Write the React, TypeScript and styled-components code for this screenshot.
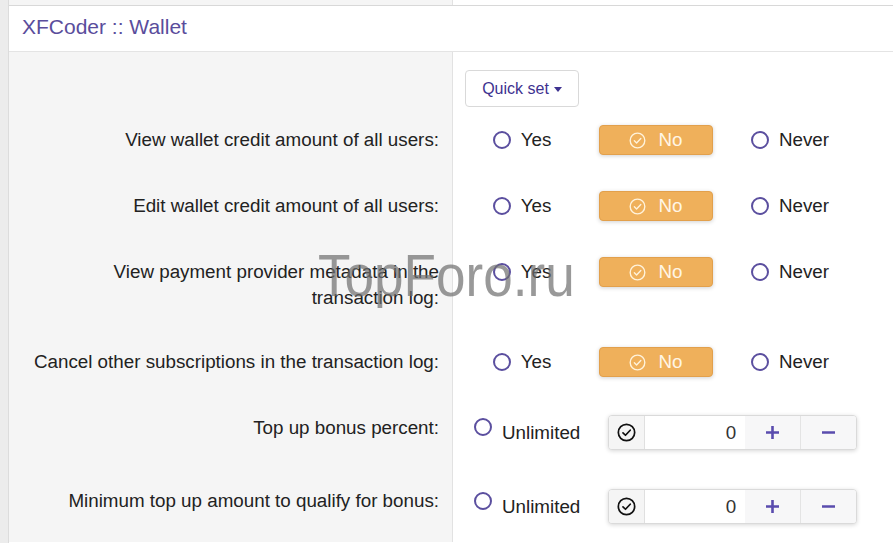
import React, { FC } from "react";
import styled, { createGlobalStyle } from "styled-components";

const GlobalStyle = createGlobalStyle`
  html, body {
    margin: 0;
    padding: 0;
    background: #ececec;
  }
  body {
    font-family: "Liberation Sans", Arial, sans-serif;
    color: #222;
  }
`;

const Page = styled.div`
  position: relative;
  padding-left: 8px;
  width: 893px;
  height: 543px;
  box-sizing: border-box;
  overflow: hidden;
`;

const Block = styled.div`
  background: #fff;
  border-left: 1px solid #dcdcdc;
  height: 100%;
`;

const TopStrip = styled.div`
  display: grid;
  grid-template-columns: 444px 1fr;
  height: 5px;
  border-bottom: 1px solid #d8d8d8;
`;

const StripLabel = styled.div`
  background: #f5f5f5;
  border-right: 1px solid #e2e2e2;
`;

const Header = styled.h2`
  margin: 0;
  height: 46px;
  box-sizing: border-box;
  display: flex;
  align-items: center;
  padding: 0 0 3px 13px;
  font-size: 21px;
  font-weight: normal;
  color: #5a4d9c;
  border-bottom: 1px solid #e4e4e4;
`;

const FormRow = styled.div`
  display: grid;
  grid-template-columns: 444px 1fr;
`;

const Label = styled.div<{ $top?: number; $bottom?: number }>`
  background: #f5f5f5;
  border-right: 1px solid #e2e2e2;
  text-align: right;
  padding: ${(p) => p.$top ?? 20}px 13px ${(p) => p.$bottom ?? 18}px 0;
  font-size: 18.8px;
  line-height: 26px;
  color: #222;
`;

const Controls = styled.div<{ $top?: number; $gap?: number }>`
  display: flex;
  align-items: flex-start;
  gap: ${(p) => p.$gap ?? 20}px;
  padding: ${(p) => p.$top ?? 18}px 0 18px 12px;
`;

const QuickRow = styled.div`
  padding: 18px 0 0 12px;
  height: 37px;
`;

const QuickSet = styled.button`
  width: 114px;
  height: 37px;
  background: #fff;
  border: 1px solid #d9d9d9;
  border-radius: 4px;
  font-family: inherit;
  font-size: 16px;
  color: #3e3290;
  display: flex;
  align-items: center;
  justify-content: center;
  gap: 5px;
  padding: 0;
`;

const Caret = styled.span`
  width: 0;
  height: 0;
  border-left: 4.5px solid transparent;
  border-right: 4.5px solid transparent;
  border-top: 5px solid #3e3290;
  margin-top: 1px;
`;

const Option = styled.label<{ $checked?: boolean }>`
  width: 114px;
  height: 30px;
  box-sizing: border-box;
  display: flex;
  align-items: center;
  justify-content: center;
  gap: ${(p) => (p.$checked ? 12 : 10)}px;
  font-size: 18.8px;
  border-radius: 4px;
  color: ${(p) => (p.$checked ? "#fff6e6" : "#222")};
  background: ${(p) => (p.$checked ? "#efb05b" : "transparent")};
  border: 1px solid ${(p) => (p.$checked ? "#e2a04c" : "transparent")};
  box-shadow: ${(p) => (p.$checked ? "0 1px 4px rgba(0,0,0,0.18)" : "none")};
`;

const Circle = styled.span<{ $top?: boolean }>`
  width: 18px;
  height: 18px;
  box-sizing: border-box;
  border-radius: 50%;
  border: 2px solid #5b4f9f;
  flex: none;
  align-self: ${(p) => (p.$top ? "flex-start" : "auto")};
  margin-top: ${(p) => (p.$top ? 3 : 0)}px;
`;

const Unlimited = styled.label`
  display: flex;
  align-items: center;
  gap: 10px;
  height: 35px;
  font-size: 18.8px;
  color: #222;
  margin-left: 9px;
  margin-right: 28px;
`;

const SpinGroup = styled.div`
  display: flex;
  width: 249px;
  height: 35px;
  box-sizing: border-box;
  border: 1px solid #dadada;
  border-radius: 4px;
  box-shadow: 0 1px 4px rgba(0, 0, 0, 0.16);
  overflow: hidden;
  background: #fff;
`;

const Addon = styled.span`
  width: 35px;
  flex: none;
  background: #f5f5f5;
  border-right: 1px solid #e0e0e0;
  display: flex;
  align-items: center;
  justify-content: center;
`;

const NumberInput = styled.span`
  width: 100px;
  flex: none;
  text-align: right;
  box-sizing: border-box;
  padding-right: 9px;
  font-size: 18.8px;
  line-height: 33px;
  color: #333;
`;

const SpinButton = styled.span<{ $last?: boolean }>`
  flex: 1;
  display: flex;
  align-items: center;
  justify-content: center;
  background: #f7f7f8;
  border-left: ${(p) => (p.$last ? "1px solid #e4e4e4" : "none")};
`;

const Watermark = styled.div`
  position: absolute;
  left: 318px;
  top: 241px;
  font-family: "Liberation Sans", Arial, sans-serif;
  font-size: 60px;
  line-height: 70px;
  color: rgba(110, 110, 110, 0.7);
  pointer-events: none;
  white-space: nowrap;
  transform: scaleX(0.885);
  transform-origin: left center;
`;

const CheckCircle: FC<{ size: number; color: string; width?: number }> = ({
  size,
  color,
  width = 1.6,
}) => (
  <svg width={size} height={size} viewBox="0 0 20 20" fill="none">
    <circle cx="10" cy="10" r="8.6" stroke={color} strokeWidth={width} />
    <path
      d="M6.3 10.3l2.6 2.6 5-5.3"
      stroke={color}
      strokeWidth={width}
      strokeLinecap="round"
      strokeLinejoin="round"
    />
  </svg>
);

const Plus = () => (
  <svg width="15" height="15" viewBox="0 0 15 15">
    <path d="M7.5 1v13M1 7.5h13" stroke="#5a4cae" strokeWidth="2.6" />
  </svg>
);

const Minus = () => (
  <svg width="15" height="15" viewBox="0 0 15 15">
    <path d="M1 7.5h13" stroke="#5a4cae" strokeWidth="2.6" />
  </svg>
);

const triState = [
  ["View wallet credit amount of all users:"],
  ["Edit wallet credit amount of all users:"],
  ["View payment provider metadata in the", "transaction log:"],
  ["Cancel other subscriptions in the transaction log:"],
];

const numeric = [
  "Top up bonus percent:",
  "Minimum top up amount to qualify for bonus:",
];

const App: FC = () => {
  return (
    <Page>
      <GlobalStyle />
      <Block>
        <TopStrip>
          <StripLabel />
          <div />
        </TopStrip>
        <Header>XFCoder :: Wallet</Header>

        <FormRow>
          <Label $top={0} $bottom={0} />
          <QuickRow>
            <QuickSet>
              Quick set <Caret />
            </QuickSet>
          </QuickRow>
        </FormRow>

        {triState.map((lines, i) => (
          <FormRow key={i}>
            <Label>
              {lines.map((line, j) => (
                <div key={j}>{line}</div>
              ))}
            </Label>
            <Controls>
              <Option>
                <Circle />
                Yes
              </Option>
              <Option $checked>
                <CheckCircle size={17} color="#fff3dc" />
                No
              </Option>
              <Option>
                <Circle />
                Never
              </Option>
            </Controls>
          </FormRow>
        ))}

        {numeric.map((text, i) => (
          <FormRow key={text}>
            <Label>{text}</Label>
            <Controls $top={i === 0 ? 20 : 21} $gap={0}>
              <Unlimited>
                <Circle $top />
                Unlimited
              </Unlimited>
              <SpinGroup>
                <Addon>
                  <CheckCircle size={19} color="#111" width={1.8} />
                </Addon>
                <NumberInput>0</NumberInput>
                <SpinButton>
                  <Plus />
                </SpinButton>
                <SpinButton $last>
                  <Minus />
                </SpinButton>
              </SpinGroup>
            </Controls>
          </FormRow>
        ))}
      </Block>
      <Watermark>TopForo.ru</Watermark>
    </Page>
  );
};

export default App;
